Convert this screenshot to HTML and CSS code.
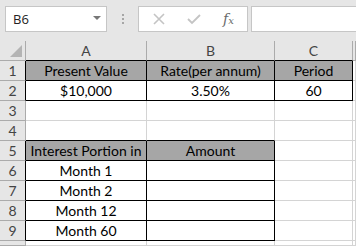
FILE: index.html
```html
<!DOCTYPE html>
<html lang="en">
<head>
    <meta charset="UTF-8">
    <title>Interest Portion</title>
    <link rel="stylesheet" href="styles.css">
</head>
<body>
    <!-- Formula bar -->
    <div class="toolbar">
        <div class="name-box">
            <span class="name-text">B6</span>
            <span class="name-arrow"></span>
        </div>
        <div class="grip">
            <span></span><span></span><span></span>
        </div>
        <div class="fx-buttons">
            <svg class="fx-icon" width="12" height="12" viewBox="0 0 12 12">
                <path d="M1 1 L11 11 M11 1 L1 11" stroke="#c4c4c4" stroke-width="1.6" fill="none"/>
            </svg>
            <svg class="fx-icon" width="14" height="12" viewBox="0 0 14 12">
                <path d="M1 6 L5 10 L13 2" stroke="#c4c4c4" stroke-width="1.8" fill="none"/>
            </svg>
            <span class="fx-label">f<small>x</small></span>
        </div>
        <div class="formula-input"></div>
    </div>

    <!-- Sheet grid -->
    <table class="sheet">
        <colgroup>
            <col class="col-rh">
            <col class="col-a">
            <col class="col-b">
            <col class="col-c">
            <col class="col-d">
        </colgroup>
        <tr class="col-head">
            <th class="corner"><span class="corner-tri"></span></th>
            <th class="bb">A</th>
            <th class="bb">B</th>
            <th class="bb">C</th>
            <th></th>
        </tr>
        <tr>
            <th class="row-head br">1</th>
            <td class="fill br bb">Present Value</td>
            <td class="fill br bb">Rate(per annum)</td>
            <td class="fill br bb">Period</td>
            <td></td>
        </tr>
        <tr>
            <th class="row-head br">2</th>
            <td class="br bb">$10,000</td>
            <td class="br bb">3.50%</td>
            <td class="br bb">60</td>
            <td></td>
        </tr>
        <tr>
            <th class="row-head">3</th>
            <td></td><td></td><td></td><td></td>
        </tr>
        <tr>
            <th class="row-head">4</th>
            <td class="bb"></td><td class="bb"></td><td></td><td></td>
        </tr>
        <tr>
            <th class="row-head br">5</th>
            <td class="fill br bb">Interest Portion in</td>
            <td class="fill br bb">Amount</td>
            <td></td><td></td>
        </tr>
        <tr>
            <th class="row-head br">6</th>
            <td class="br bb">Month 1</td>
            <td class="br bb"></td>
            <td></td><td></td>
        </tr>
        <tr>
            <th class="row-head br">7</th>
            <td class="br bb">Month 2</td>
            <td class="br bb"></td>
            <td></td><td></td>
        </tr>
        <tr>
            <th class="row-head br">8</th>
            <td class="br bb">Month 12</td>
            <td class="br bb"></td>
            <td></td><td></td>
        </tr>
        <tr>
            <th class="row-head br">9</th>
            <td class="br bb">Month 60</td>
            <td class="br bb"></td>
            <td></td><td></td>
        </tr>
        <tr class="row-last">
            <th class="row-head"></th>
            <td></td><td></td><td></td><td></td>
        </tr>
    </table>
</body>
</html>
```

FILE: styles.css
```css
* {
    margin: 0;
    padding: 0;
    box-sizing: border-box;
}

body {
    width: 356px;
    height: 246px;
    overflow: hidden;
    background: #ffffff;
    font-family: Lato, "Open Sans", sans-serif;
    color: #000;
}

/* Formula bar */
.toolbar {
    height: 41px;
    background: #e6e6e6;
    display: flex;
    align-items: flex-start;
    padding: 6px 0 0 5px;
}

.name-box {
    width: 102px;
    height: 26px;
    background: #fff;
    border: 1px solid #c6c6c6;
    display: flex;
    align-items: center;
    justify-content: space-between;
    padding: 0 5px 0 7px;
}

.name-text {
    font-family: "Open Sans", sans-serif;
    font-size: 13px;
    color: #222;
}

.name-arrow {
    width: 0;
    height: 0;
    border-left: 4px solid transparent;
    border-right: 4px solid transparent;
    border-top: 4px solid #777;
    margin-bottom: 2px;
}

.grip {
    width: 31px;
    height: 26px;
    display: flex;
    flex-direction: column;
    align-items: center;
    justify-content: center;
    gap: 2px;
}

.grip span {
    width: 2px;
    height: 2px;
    background: #a6a6a6;
}

.fx-buttons {
    width: 110px;
    height: 26px;
    background: #fff;
    border: 1px solid #c6c6c6;
    display: flex;
    align-items: center;
    padding-left: 14px;
}

.fx-icon {
    margin-right: 22px;
}

.fx-label {
    font-family: "DejaVu Serif", "Liberation Serif", serif;
    font-style: italic;
    font-size: 14px;
    color: #6a6a6a;
}

.fx-label small {
    font-size: 10px;
}

.formula-input {
    flex: 1;
    height: 26px;
    margin-left: 3px;
    background: #fff;
    border: 1px solid #c6c6c6;
    border-right: none;
}

/* Sheet */
.sheet {
    border-collapse: separate;
    border-spacing: 0;
    table-layout: fixed;
    width: 356px;
    font-size: 14px;
}

.col-rh { width: 26px; }
.col-a { width: 121px; }
.col-b { width: 128px; }
.col-c { width: 78px; }
.col-d { width: 3px; }

.sheet th,
.sheet td {
    height: 20px;
    padding: 0 2px;
    text-align: center;
    vertical-align: middle;
    border-right: 1px solid #d4d4d4;
    border-bottom: 1px solid #d4d4d4;
    line-height: 18px;
    white-space: nowrap;
    overflow: hidden;
}

.sheet .row-last th,
.sheet .row-last td {
    height: 5px;
    line-height: 4px;
}

.col-head th {
    background: #e6e6e6;
    color: #444;
    font-weight: normal;
    border-right-color: #ababab;
    border-bottom-color: #ababab;
}

.row-head {
    background: #e6e6e6;
    color: #444;
    font-weight: normal;
    border-right-color: #ababab !important;
    border-bottom-color: #ababab !important;
}

.corner {
    position: relative;
}

.corner-tri {
    position: absolute;
    right: 3px;
    bottom: 3px;
    width: 0;
    height: 0;
    border-left: 12px solid transparent;
    border-bottom: 12px solid #b4b4b4;
}

.fill {
    background: #a6a6a6;
}

.sheet .br {
    border-right-color: #000;
}

.sheet .bb {
    border-bottom-color: #000;
}

.col-head th.bb {
    border-bottom-color: #000;
}

.row-head.br {
    border-right-color: #000 !important;
}
```
